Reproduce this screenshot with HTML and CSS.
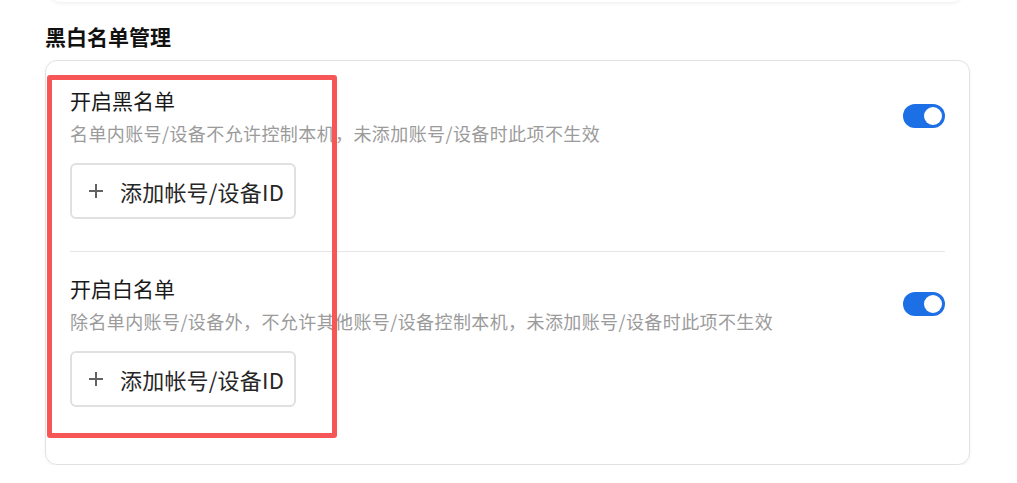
FILE: index.html
```html
<!DOCTYPE html>
<html lang="zh-CN">
<head>
  <meta charset="UTF-8" />
  <title>黑白名单管理</title>
  <link rel="stylesheet" href="styles.css">
</head>
<body>
  <div class="page">
    <div class="prev-card"></div>

    <h2 class="section-title">黑白名单管理</h2>

    <div class="card">
      <div class="mark-box"></div>

      <div class="rule">
        <div class="rule-head">
          <div class="rule-text">
            <div class="rule-name">开启黑名单</div>
            <div class="rule-desc">名单内账号/设备不允许控制本机，未添加账号/设备时此项不生效</div>
          </div>
          <span class="switch on"><span class="knob"></span></span>
        </div>
        <button class="add-btn">
          <svg width="14" height="14" viewBox="0 0 14 14"><path d="M7 0v14M0 7h14" stroke="#606266" stroke-width="2" fill="none"/></svg>
          <span>添加帐号/设备ID</span>
        </button>
      </div>

      <div class="rule">
        <div class="rule-head">
          <div class="rule-text">
            <div class="rule-name">开启白名单</div>
            <div class="rule-desc">除名单内账号/设备外，不允许其他账号/设备控制本机，未添加账号/设备时此项不生效</div>
          </div>
          <span class="switch on"><span class="knob"></span></span>
        </div>
        <button class="add-btn">
          <svg width="14" height="14" viewBox="0 0 14 14"><path d="M7 0v14M0 7h14" stroke="#606266" stroke-width="2" fill="none"/></svg>
          <span>添加帐号/设备ID</span>
        </button>
      </div>
    </div>
  </div>
</body>
</html>
```

FILE: styles.css
```css
body {
  margin: 0;
  background: #fff;
  font-family: "Noto Sans CJK SC", "Noto Sans", sans-serif;
  color: #1a1a1a;
}
.page {
  padding: 0 47px 0 45px;
  width: 925px;
}
.prev-card {
  margin: -40px 8px 0 5px;
  height: 42px;
  background: #fff;
  border-radius: 0 0 10px 10px;
  box-shadow: 0 1px 4px rgba(0, 0, 0, 0.08);
}
.section-title {
  margin: 19px 0 9px;
  font-size: 21px;
  line-height: 30px;
  font-weight: 700;
  color: #111;
}
.card {
  position: relative;
  border: 1px solid #e2e2e2;
  border-radius: 12px;
  padding: 2px 24px 25px;
  box-shadow: 0 1px 3px rgba(0, 0, 0, 0.06);
}
/* red outline drawn over the two rules */
.mark-box {
  position: absolute;
  left: 1px;
  top: 14px;
  width: 280px;
  height: 353px;
  border: 5px solid #f65656;
  border-radius: 3px;
  pointer-events: none;
}
.rule {
  padding: 23px 0 32px;
}
.rule:first-of-type {
  padding-bottom: 33px;
}
.rule + .rule {
  padding-top: 22px;
  border-top: 1px solid #e6e6e6;
}
.rule-head {
  display: flex;
  align-items: center;
  justify-content: space-between;
}
.rule-name {
  font-size: 21px;
  line-height: 28px;
  color: #1a1a1a;
}
.rule-desc {
  margin-top: 6px;
  font-size: 18px;
  line-height: 26px;
  letter-spacing: 0.4px;
  color: #9b9b9b;
}
.switch {
  width: 42px;
  height: 24px;
  border-radius: 12px;
  background: #dcdfe6;
  display: flex;
  align-items: center;
  padding: 0 3px;
  box-sizing: border-box;
}
.switch.on {
  background: #1d6fe5;
  justify-content: flex-end;
}
.knob {
  width: 18px;
  height: 18px;
  border-radius: 50%;
  background: #fff;
}
.add-btn {
  margin-top: 17px;
  display: flex;
  align-items: center;
  gap: 17px;
  width: 226px;
  height: 56px;
  padding: 0 0 0 17px;
  border: 2px solid #e0e0e0;
  border-radius: 6px;
  background: #fff;
  font-family: inherit;
  font-size: 22px;
  letter-spacing: 0.2px;
  color: #262626;
  cursor: pointer;
}
```
